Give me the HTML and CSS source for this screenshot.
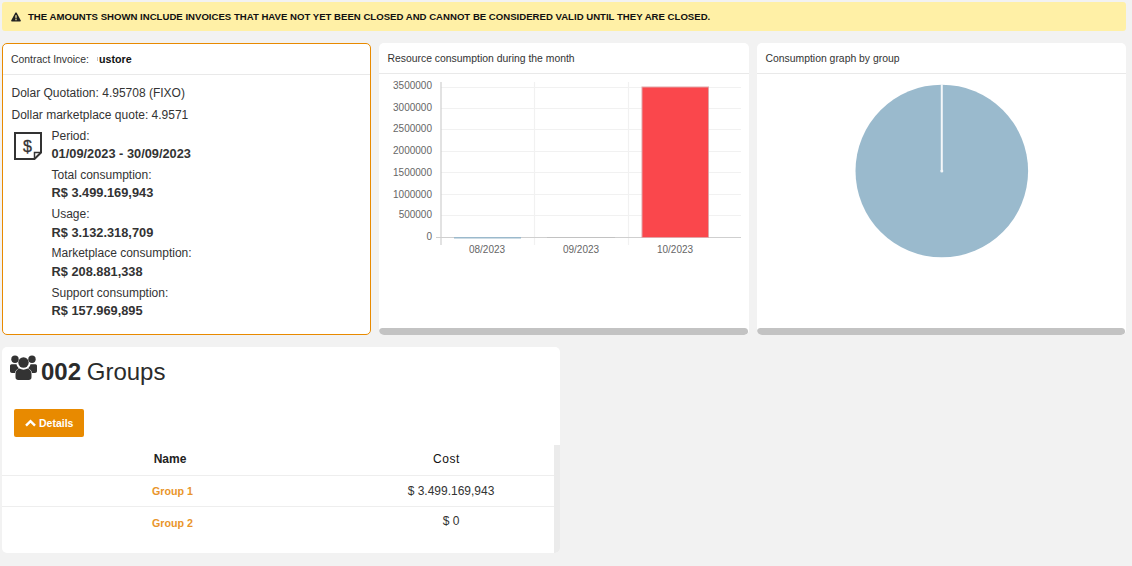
FILE: index.html
```html
<!DOCTYPE html>
<html lang="en">
<head>
<meta charset="utf-8">
<title>Contract Invoice</title>
<link rel="stylesheet" href="styles.css">
</head>
<body>
<div class="alert">
  <svg class="alert-icon" width="10" height="10" viewBox="0 0 10 10"><path fill="#222" fill-rule="evenodd" d="M5 .4c.3 0 .5.1.7.4l4.1 7.6c.3.6-.1 1.2-.7 1.2H.9c-.6 0-1-.6-.7-1.2L4.3.8C4.5.5 4.7.4 5 .4zM4.3 3.2l.2 3.2h1l.2-3.2zM4.4 7.1v1.1h1.2V7.1z"/></svg>
  <span>THE AMOUNTS SHOWN INCLUDE INVOICES THAT HAVE NOT YET BEEN CLOSED AND CANNOT BE CONSIDERED VALID UNTIL THEY ARE CLOSED.</span>
</div>
<div class="cards">
  <section class="card card-active">
    <header class="card-head invoice-head"><span>Contract Invoice:</span><strong>ustore</strong></header>
    <div class="invoice-body">
      <p class="quote">Dolar Quotation: 4.95708 (FIXO)</p>
      <p class="quote">Dollar marketplace quote: 4.9571</p>
      <div class="invoice-details">
        <svg class="invoice-icon" width="28" height="28" viewBox="0 0 28 28">
          <path fill="none" stroke="#333" stroke-width="2" d="M1 1h26v19.500L20.500 27H1z"/>
          <path fill="none" stroke="#333" stroke-width="1.500" d="M26.500 20.500h-6v6"/>
          <text x="13.500" y="20" text-anchor="middle" class="icon-dollar">$</text>
        </svg>
        <dl class="figures">
          <dt>Period:</dt><dd>01/09/2023 - 30/09/2023</dd>
          <dt>Total consumption:</dt><dd>R$ 3.499.169,943</dd>
          <dt>Usage:</dt><dd>R$ 3.132.318,709</dd>
          <dt>Marketplace consumption:</dt><dd>R$ 208.881,338</dd>
          <dt>Support consumption:</dt><dd>R$ 157.969,895</dd>
        </dl>
      </div>
    </div>
  </section>
  <section class="card">
    <header class="card-head">Resource consumption during the month</header>
    <div class="chart-body">
      <svg class="chart" width="370" height="254" viewBox="379 74 370 254">
        <g class="grid">
          <path d="M441 87.500H741M441 108.500H741M441 129.500H741M441 151.500H741M441 172.500H741M441 194.500H741M441 215.500H741"/>
          <path d="M534.500 82V245M628.500 82V245"/>
        </g>
        <path class="axis" d="M441 82V245M436 237.500H741"/>
        <rect x="642" y="87" width="66.500" height="150.500" fill="#fa474c" stroke="#e0a5a8"/>
        <rect x="454" y="237" width="67" height="1.500" fill="#9bb9cc"/>
        <rect x="547" y="237" width="68" height="1" fill="#c2c2c2"/>
        <g class="y-labels">
          <text x="432" y="89">3500000</text>
          <text x="432" y="111">3000000</text>
          <text x="432" y="132">2500000</text>
          <text x="432" y="154">2000000</text>
          <text x="432" y="176">1500000</text>
          <text x="432" y="198">1000000</text>
          <text x="432" y="218">500000</text>
          <text x="432" y="240">0</text>
        </g>
        <g class="x-labels">
          <text x="487" y="253">08/2023</text>
          <text x="581" y="253">09/2023</text>
          <text x="675" y="253">10/2023</text>
        </g>
      </svg>
    </div>
    <div class="scrollbar"></div>
  </section>
  <section class="card">
    <header class="card-head">Consumption graph by group</header>
    <div class="chart-body">
      <svg class="chart" width="369" height="254" viewBox="757 74 369 254">
        <circle cx="941.800" cy="171" r="86.300" fill="#9abacd"/>
        <path d="M941.800 84V171" stroke="#f4f7f9" stroke-width="2"/>
        <circle cx="941.800" cy="171" r="1.500" fill="#f4f7f9"/>
      </svg>
    </div>
    <div class="scrollbar"></div>
  </section>
</div>
<section class="groups">
  <h2 class="groups-title">
    <svg class="users-icon" width="27" height="25" viewBox="0 0 27 25">
      <g fill="#333">
        <circle cx="5" cy="4.200" r="3.700"/><circle cx="22" cy="4.200" r="3.700"/><circle cx="13.500" cy="7.500" r="5.200"/>
        <path d="M0 11c0-1 .7-1.700 1.500-1.700h5c.4 1.700 1.300 3 2.500 4-2.400 1-3.700 2.700-4 4.700H2c-1.200 0-2-.7-2-2zM27 11c0-1-.7-1.700-1.500-1.700h-5c-.4 1.700-1.300 3-2.500 4 2.400 1 3.700 2.700 4 4.700H25c1.200 0 2-.7 2-2z"/>
        <path d="M9.500 13.600c2.400 1.500 5.600 1.500 8 0 2.600.8 4 2.800 4 5.500v3.100c0 1.800-1.100 2.800-2.700 2.800H8.200c-1.600 0-2.700-1-2.700-2.800v-3.100c0-2.700 1.400-4.700 4-5.500z"/>
      </g>
    </svg>
    <span class="groups-label"><b>002</b> Groups</span>
  </h2>
  <button class="details-btn" type="button">
    <svg width="11" height="8" viewBox="0 0 11 8"><path fill="none" stroke="#fff" stroke-width="2.400" d="M1 6.700l4.500-4.500 4.500 4.500"/></svg>
    Details
  </button>
  <div class="table-wrap">
    <table class="groups-table">
      <thead>
        <tr><th class="col-name">Name</th><th class="col-cost">Cost</th></tr>
      </thead>
      <tbody>
        <tr class="row-one"><td><span class="group-link">Group 1</span></td><td>$ 3.499.169,943</td></tr>
        <tr class="row-two"><td><span class="group-link group-patch">Group 2</span></td><td>$ 0</td></tr>
      </tbody>
    </table>
  </div>
</section>
</body>
</html>
```
FILE: styles.css
```css
* { box-sizing: border-box; }
html, body { margin: 0; height: 100%; overflow: hidden; }
body {
  background: #f2f2f2;
  color: #333;
  font-family: "Liberation Sans", Arial, sans-serif;
  font-size: 12px;
  padding: 2px 6px 0 2px;
}
.alert {
  height: 29px;
  background: #fff0a6;
  border-radius: 3px;
  display: flex;
  align-items: center;
  gap: 7px;
  padding-left: 9px;
  font-size: 9.600px;
  font-weight: 700;
  color: #111;
}
.alert-icon { flex: none; }
.cards {
  display: grid;
  grid-template-columns: 369px 370px 369px;
  column-gap: 8px;
  margin-top: 12px;
  height: 292px;
}
.card {
  background: #fff;
  border-radius: 5px;
  display: flex;
  flex-direction: column;
  overflow: hidden;
  position: relative;
}
.card-active { border: 1px solid #e88a00; }
.card-head {
  height: 31px;
  flex: none;
  border-bottom: 1px solid #e9e9e9;
  padding: 10px 0 0 8.500px;
  font-size: 10.400px;
  line-height: 11px;
  color: #333;
}
.invoice-head {
  height: 31px;
  padding: 0 0 0 8px;
  display: flex;
  align-items: center;
  gap: 10px;
}
.invoice-head strong {
  color: #111;
  font-size: 10.700px;
  display: flex;
  align-items: center;
  margin-left: -2px;
  gap: 1px;
}
.invoice-head strong::before {
  content: "";
  width: 1px;
  height: 4px;
  background: #c4c4c4;
}
.invoice-body { padding: 11px 0 0 8.500px; }
.quote {
  margin: 0 0 8.300px;
  line-height: 14px;
  color: #333;
}
.invoice-details {
  display: flex;
  margin-top: -2px;
}
.invoice-icon { flex: none; margin: 3px 0 0 2px; }
.icon-dollar { font-family: "Liberation Sans", Arial, sans-serif; font-size: 16px; fill: #333; stroke: #333; stroke-width: .3px; }
.figures { margin: 0 0 0 10px; }
.figures dt { line-height: 14px; margin-top: 6.800px; height: 14px; }
.figures dt:first-child { margin-top: 0; }
.figures dd {
  margin: 3.500px 0 0;
  line-height: 15px;
  height: 15px;
  font-size: 12.800px;
  font-weight: 700;
  color: #333;
}
.chart-body { flex: 1; min-height: 0; }
.chart { display: block; }
.grid path { stroke: #f1f1f1; stroke-width: 1.200; fill: none; }
.axis { stroke: #cfcfcf; stroke-width: 1.200; fill: none; }
.y-labels text, .x-labels text {
  font-family: "Liberation Sans", Arial, sans-serif;
  font-size: 10px;
  fill: #666;
}
.y-labels text { text-anchor: end; }
.x-labels text { text-anchor: middle; }
.scrollbar {
  flex: none;
  height: 7px;
  background: #c3c3c3;
  border-radius: 4px;
  margin-right: 1px;
}
.groups {
  width: 558px;
  height: 206px;
  margin-top: 12px;
  background: #fff;
  border-radius: 5px;
  overflow: hidden;
}
.groups-title {
  margin: 0;
  padding: 7px 0 0 8px;
  height: 62px;
  display: flex;
  align-items: flex-start;
  gap: 4px;
  font-size: 24px;
  font-weight: 400;
  line-height: 36px;
  color: #2b2b2b;
}
.groups-label { word-spacing: -1px; }
.users-icon { flex: none; margin-top: 1px; }
.details-btn {
  display: flex;
  align-items: center;
  gap: 3px;
  height: 28px;
  width: 70px;
  margin-left: 12px;
  padding: 0 0 0 11px;
  border: 0;
  border-radius: 2px;
  background: #e88a00;
  color: #fff;
  font: 700 10.500px "Liberation Sans", Arial, sans-serif;
}
.table-wrap {
  margin-top: 8px;
  height: 108px;
  border-right: 6px solid #ebebeb;
}
.groups-table {
  width: 552px;
  border-collapse: collapse;
  table-layout: fixed;
}
.col-name { width: 336px; }
.groups-table th {
  height: 30px;
  padding: 0 0 1px;
  text-align: center;
  border-bottom: 1px solid #eeeeee;
  font-weight: 700;
  color: #222;
}
.groups-table .col-cost { font-weight: 400; letter-spacing: .6px; color: #111; padding-left: 1px; }
.groups-table td {
  text-align: center;
  padding: 0 0 0 10px;
  color: #333;
}
.groups-table td:first-child { padding-left: 0; }
.row-one td { height: 31px; border-bottom: 1px solid #eeeeee; }
.row-two td { height: 29px; padding-top: 1px; vertical-align: middle; }
.row-two td:first-child { vertical-align: top; padding-top: 0; }
.group-link {
  display: block;
  width: 92px;
  margin-left: 149px;
  text-align: left;
  padding-left: 1px;
  font-size: 10.700px;
  font-weight: 700;
  color: #e9952b;
}
.group-patch {
  background: #fff;
  margin-top: -2px;
  padding-top: 12px;
  line-height: 12px;
}
```
